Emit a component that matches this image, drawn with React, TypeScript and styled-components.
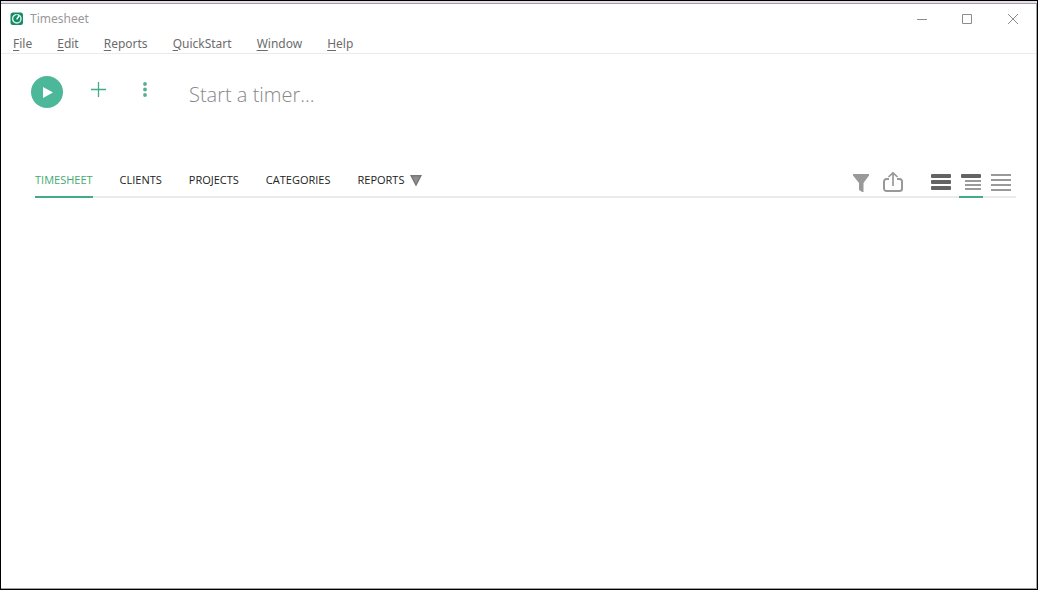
import React, { useState } from "react";
import styled, { createGlobalStyle } from "styled-components";

const GlobalStyle = createGlobalStyle`
  * { box-sizing: border-box; }
  html, body, #root { height: 100%; }
  body { margin: 0; background: #fff; font-family: "Noto Sans", "Open Sans", sans-serif; }
  button { margin: 0; padding: 0; border: 0; background: none; font: inherit; color: inherit; }
  svg { display: block; }
`;

const Frame = styled.div`
  min-height: 100%;
  display: flex;
  flex-direction: column;
  border: 1px solid #000;
  background: #fff;
`;

const Surface = styled.div`
  flex: 1;
  display: flex;
  flex-direction: column;
  border-right: 1px solid #a6a4a6;
  border-bottom: 1px solid #a0a0a0;
`;

const TopEdge = styled.div`
  height: 3px;
  background: #e6e0e8;
  border-bottom: 1px solid #a19ca3;
`;

const TitleBar = styled.header`
  display: flex;
  align-items: center;
  height: 30px;
  padding-left: 9px;
`;

const Title = styled.h1`
  flex: 1;
  margin: 0 0 0 6px;
  font-size: 12px;
  line-height: 20px;
  font-weight: 400;
  color: #999;
`;

const WindowButton = styled.button`
  width: 46px;
  height: 28px;
  display: grid;
  place-items: center;
  color: #8c8c8c;
`;

const MenuBar = styled.nav`
  display: flex;
  gap: 25px;
  height: 20px;
  padding-left: 12px;
  border-bottom: 1px solid #ececec;
`;

const MenuItem = styled.button`
  font-size: 12px;
  line-height: 18px;
  color: #6c6c6c;
`;

const Mnemonic = styled.span`
  text-decoration: underline;
  text-underline-offset: 2px;
`;

const TimerBar = styled.section`
  display: flex;
  align-items: center;
  height: 76px;
  padding: 0 20px 0 30px;
`;

const PlayButton = styled.button`
  width: 32px;
  height: 32px;
  border-radius: 50%;
  background: #4db899;
  display: grid;
  place-items: center;
`;

const ActionButton = styled.button`
  width: 24px;
  height: 28px;
  margin-left: 23px;
  padding-top: 4px;
  display: grid;
  place-items: start center;
  color: #43ab88;
`;

const TimerInput = styled.input`
  flex: 1;
  min-width: 0;
  height: 36px;
  margin-left: 32px;
  padding: 4px 0 0;
  border: 0;
  outline: 0;
  font-family: "Open Sans", sans-serif;
  font-size: 20px;
  font-weight: 300;
  color: #555;
  &::placeholder { color: #888; opacity: 1; }
`;

const Content = styled.main`
  flex: 1;
  padding: 34px 20px 0 34px;
`;

const TabBar = styled.div`
  display: flex;
  justify-content: space-between;
  height: 34px;
  box-shadow: inset 0 -2px #ebebeb;
`;

const Tabs = styled.div`
  display: flex;
  gap: 27px;
`;

const Tab = styled.button<{ $active?: boolean }>`
  display: flex;
  align-items: center;
  gap: 6px;
  height: 34px;
  padding-bottom: 2px;
  border-bottom: 2px solid ${(p) => (p.$active ? "#43ab88" : "transparent")};
  font-family: "Open Sans", sans-serif;
  font-size: 11px;
  color: ${(p) => (p.$active ? "#43ab72" : "#222")};
`;

const Tools = styled.div`
  display: flex;
  gap: 8px;
  padding-right: 3px;
`;

const Views = styled.div`
  display: flex;
  gap: 6px;
  margin-left: 16px;
`;

const ToolButton = styled.button<{ $active?: boolean }>`
  width: 24px;
  height: 34px;
  display: grid;
  place-items: center;
  padding-top: 4px;
  border-bottom: 2px solid ${(p) => (p.$active ? "#43ab88" : "transparent")};
`;

const menus = ["File", "Edit", "Reports", "QuickStart", "Window", "Help"];
const tabs = ["TIMESHEET", "CLIENTS", "PROJECTS", "CATEGORIES", "REPORTS"];

const AppLogo = () => (
  <svg width="14" height="14" viewBox="0 0 14 14" aria-hidden="true">
    <rect x="0.5" y="0.5" width="12.5" height="12.5" rx="2.5" fill="#168b68" />
    <circle cx="6.8" cy="6.8" r="4.2" fill="none" stroke="#d9f0e7" strokeWidth="1.4" />
    <path d="M6.8 7.6V2.600" stroke="#168b68" strokeWidth="1" />
    <path d="M6.600 7.400 9.200 3.600" stroke="#fff" strokeWidth="1.5" />
  </svg>
);

const icons = {
  minimize: (
    <svg width="12" height="10"><path d="M2 5.5h10" stroke="currentColor" /></svg>
  ),
  maximize: (
    <svg width="10" height="10"><path d="M.5.5h9v9h-9z" fill="none" stroke="currentColor" /></svg>
  ),
  close: (
    <svg width="10" height="10"><path d="m0 0 10 10M10 0 0 10" stroke="currentColor" /></svg>
  ),
  play: (
    <svg width="14" height="12"><path d="M3 1v11l10-5.5z" fill="#fff" /></svg>
  ),
  plus: (
    <svg width="16" height="16"><path d="M8.5 0v15M1 7.5h15" stroke="currentColor" strokeWidth="1.3" /></svg>
  ),
  more: (
    <svg width="4" height="16" fill="#5aae8d">
      <circle cx="2" cy="2" r="1.9" /><circle cx="2" cy="7.5" r="1.9" /><circle cx="2" cy="13" r="1.9" />
    </svg>
  ),
  caret: (
    <svg width="12" height="16">
      <path d="M0 4h12L6 15.5z" fill="#777" /><path d="M2.5 5.500h7L6 12.500z" fill="#8f8f8f" />
    </svg>
  ),
  filter: (
    <svg width="16" height="20"><path d="M0 2h16v1.500L10.500 11v9L10 20.500 6 18v-7L0 3.500z" fill="#999" /></svg>
  ),
  share: (
    <svg width="20" height="20" viewBox="0 0 20 20" fill="none" stroke="#999" strokeWidth="2">
      <path d="M6 7H3.5A2.5 2.5 0 0 0 1 9.500v7A2.500 2.500 0 0 0 3.500 19h13a2.500 2.500 0 0 0 2.500-2.500v-7A2.500 2.500 0 0 0 16.500 7H14" />
      <path d="M10 14V1M5.500 5 10 .8 14.500 5" strokeWidth="1.700" />
    </svg>
  ),
  large: (
    <svg width="20" height="20" fill="#636363">
      <rect y="2" width="20" height="4" rx="1" /><rect y="8" width="20" height="4" rx="1" /><rect y="14" width="20" height="4" rx="1" />
    </svg>
  ),
  grouped: (
    <svg width="20" height="20" fill="#999">
      <rect y="2" width="20" height="4" rx="1" fill="#636363" />
      <path d="M4 8h16v2H4zM4 12h16v2H4zM4 16h16v2H4z" />
    </svg>
  ),
  compact: (
    <svg width="20" height="20" fill="#999"><path d="M0 2h20v2H0zM0 7h20v2H0zM0 12h20v2H0zM0 17h20v2H0z" /></svg>
  ),
};

const views = [
  { id: "large", label: "Large rows", icon: icons.large },
  { id: "grouped", label: "Grouped rows", icon: icons.grouped },
  { id: "compact", label: "Compact rows", icon: icons.compact },
];

export default function App() {
  const [tab, setTab] = useState("TIMESHEET");
  const [view, setView] = useState("grouped");
  return (
    <>
      <GlobalStyle />
      <Frame>
        <TopEdge />
        <Surface>
          <TitleBar>
            <AppLogo />
            <Title>Timesheet</Title>
            <WindowButton aria-label="Minimize">{icons.minimize}</WindowButton>
            <WindowButton aria-label="Maximize">{icons.maximize}</WindowButton>
            <WindowButton aria-label="Close">{icons.close}</WindowButton>
          </TitleBar>
          <MenuBar aria-label="Application menu">
            {menus.map((m) => (
              <MenuItem key={m}><Mnemonic>{m[0]}</Mnemonic>{m.slice(1)}</MenuItem>
            ))}
          </MenuBar>
          <TimerBar>
            <PlayButton aria-label="Start timer">{icons.play}</PlayButton>
            <ActionButton aria-label="Add entry">{icons.plus}</ActionButton>
            <ActionButton aria-label="More options">{icons.more}</ActionButton>
            <TimerInput aria-label="Timer description" placeholder="Start a timer..." />
          </TimerBar>
          <Content>
            <TabBar>
              <Tabs role="tablist">
                {tabs.map((t) => (
                  <Tab key={t} role="tab" aria-selected={tab === t} $active={tab === t} onClick={() => setTab(t)}>
                    {t}
                    {t === "REPORTS" && icons.caret}
                  </Tab>
                ))}
              </Tabs>
              <Tools>
                <ToolButton aria-label="Filter">{icons.filter}</ToolButton>
                <ToolButton aria-label="Share">{icons.share}</ToolButton>
                <Views>
                  {views.map((v) => (
                    <ToolButton key={v.id} aria-label={v.label} $active={view === v.id} onClick={() => setView(v.id)}>
                      {v.icon}
                    </ToolButton>
                  ))}
                </Views>
              </Tools>
            </TabBar>
          </Content>
        </Surface>
      </Frame>
    </>
  );
}
